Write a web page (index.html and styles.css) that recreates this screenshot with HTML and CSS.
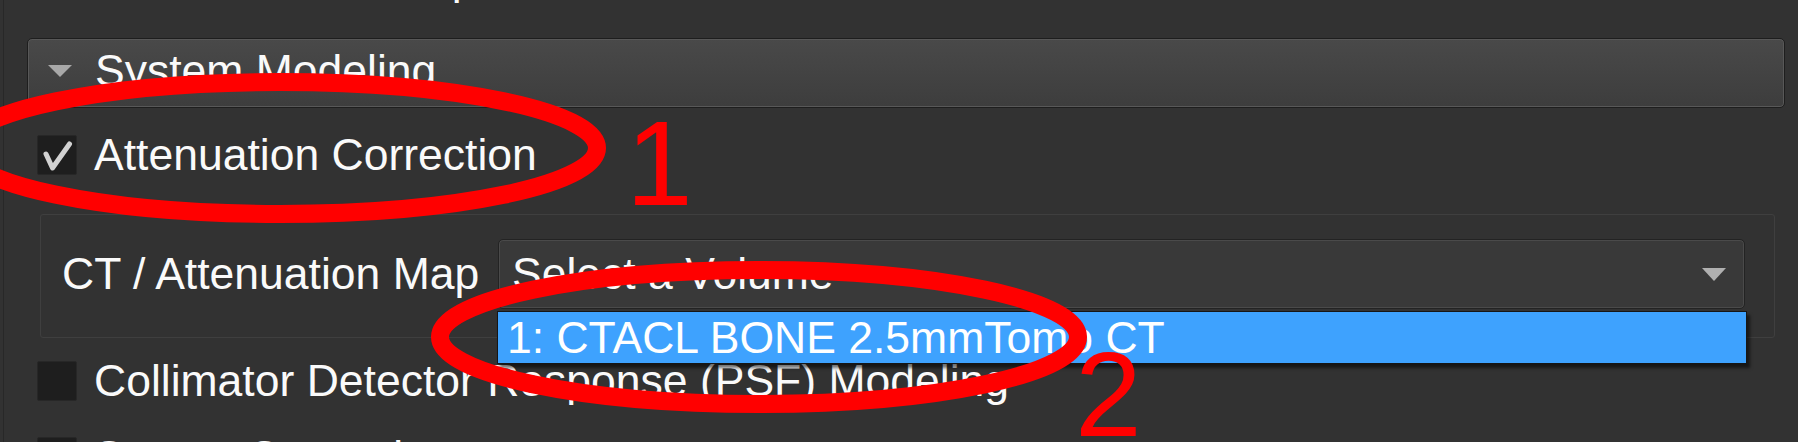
FILE: index.html
```html
<!DOCTYPE html>
<html lang="en">
<head>
<meta charset="utf-8">
<title>System Modeling</title>
<link rel="stylesheet" href="styles.css">
</head>
<body>
<div class="panel">
  <div class="prev-title">Reconstruction Setup</div>
  <div class="section-header">
    <span class="tri"></span>
    <span class="section-title">System Modeling</span>
  </div>
  <div class="row first">
    <span class="cb">
      <svg class="check" width="38" height="38" viewBox="0 0 38 38"><path d="M8 18 L14.5 32 L31.5 8" fill="none" stroke="#d2d2d2" stroke-width="5" stroke-linecap="round" stroke-linejoin="round"/></svg>
    </span>
    <span class="label">Attenuation Correction</span>
  </div>
  <div class="group">
    <span class="glabel">CT / Attenuation Map</span>
    <div class="combo">
      <span class="combo-text">Select a Volume</span>
      <span class="combo-arrow"></span>
      <div class="popup">
        <div class="item">1: CTACL BONE 2.5mmTomo CT</div>
      </div>
    </div>
  </div>
  <div class="row second">
    <span class="cb"></span>
    <span class="label">Collimator Detector Response (PSF) Modeling</span>
  </div>
  <div class="row">
    <span class="cb"></span>
    <span class="label">Scatter Correction</span>
  </div>
</div>
<svg class="annot" width="1798" height="442" viewBox="0 0 1798 442">
  <ellipse cx="280" cy="148" rx="317" ry="66" fill="none" stroke="#ff0000" stroke-width="18"/>
  <ellipse cx="759" cy="337" rx="319" ry="67" fill="none" stroke="#ff0000" stroke-width="18"/>
  <text class="num" x="626" y="205">1</text>
  <text class="num" x="1075" y="436">2</text>
</svg>
</body>
</html>
```

FILE: styles.css
```css
html, body {
  margin: 0;
  padding: 0;
}

body {
  position: relative;
  width: 1798px;
  height: 442px;
  overflow: hidden;
  background: #323232;
  color: #fafafa;
  font-family: "Liberation Sans", Arial, sans-serif;
  font-size: 44.5px;
}

.panel {
  margin-left: 3px;
  border-left: 1px solid #282828;
  height: 442px;
  overflow: hidden;
}

.prev-title {
  margin-top: -47px;
  height: 52px;
  line-height: 52px;
  padding-left: 47px;
  white-space: nowrap;
}

.section-header {
  margin: 33px 13px 0 23px;
  height: 70px;
  box-sizing: border-box;
  border: 1px solid #1e1e1e;
  border-radius: 5px;
  background: linear-gradient(#494949, #3d3d3d);
  box-shadow: inset 0 0 0 1px #585858;
  display: flex;
  align-items: center;
  padding: 0 0 4px 20px;
}

.tri {
  width: 0;
  height: 0;
  border-left: 12px solid transparent;
  border-right: 12px solid transparent;
  border-top: 12px solid #a8a8a8;
  margin-right: 23px;
}

.section-title {
  white-space: nowrap;
}

.row {
  height: 76px;
  display: flex;
  align-items: center;
  padding-left: 33px;
  white-space: nowrap;
}

.row.first {
  margin-top: 9px;
}

.row.second {
  margin-top: 5px;
}

.cb {
  flex: 0 0 auto;
  width: 40px;
  height: 40px;
  box-sizing: border-box;
  background: #1e1e1e;
  border: 1px solid #272727;
  border-radius: 2px;
  margin-right: 17px;
}

.check {
  display: block;
}

.group {
  margin: 21px 23px 0 36px;
  border: 1px solid #3f3f3f;
  border-radius: 3px;
  padding: 24px 29px 28px 21px;
  display: flex;
  align-items: center;
}

.glabel {
  flex: 0 0 436px;
  white-space: nowrap;
}

.combo {
  flex: 1 1 auto;
  position: relative;
  height: 70px;
  box-sizing: border-box;
  border: 1px solid #232323;
  border-radius: 5px;
  background: #393939;
  box-shadow: inset 0 0 0 1px #4a4a4a;
  display: flex;
  align-items: center;
  padding: 0 18px 0 13px;
}

.combo-text {
  white-space: nowrap;
}

.combo-arrow {
  margin-left: auto;
  width: 0;
  height: 0;
  border-left: 12px solid transparent;
  border-right: 12px solid transparent;
  border-top: 13px solid #b0b0b0;
}

.popup {
  position: absolute;
  left: -2px;
  right: -3px;
  top: calc(100% + 3px);
  height: 53px;
  box-sizing: border-box;
  background: #3ea2fe;
  border: 1px solid #161616;
  box-shadow: 3px 4px 3px rgba(0, 0, 0, 0.55);
  display: flex;
  align-items: center;
  padding-left: 9px;
  z-index: 2;
}

.item {
  color: #ffffff;
  white-space: nowrap;
}

.annot {
  position: absolute;
  left: 0;
  top: 0;
  pointer-events: none;
  z-index: 5;
}

.num {
  font-family: "Liberation Sans", Arial, sans-serif;
  font-size: 120px;
  fill: #ff0000;
}
```
